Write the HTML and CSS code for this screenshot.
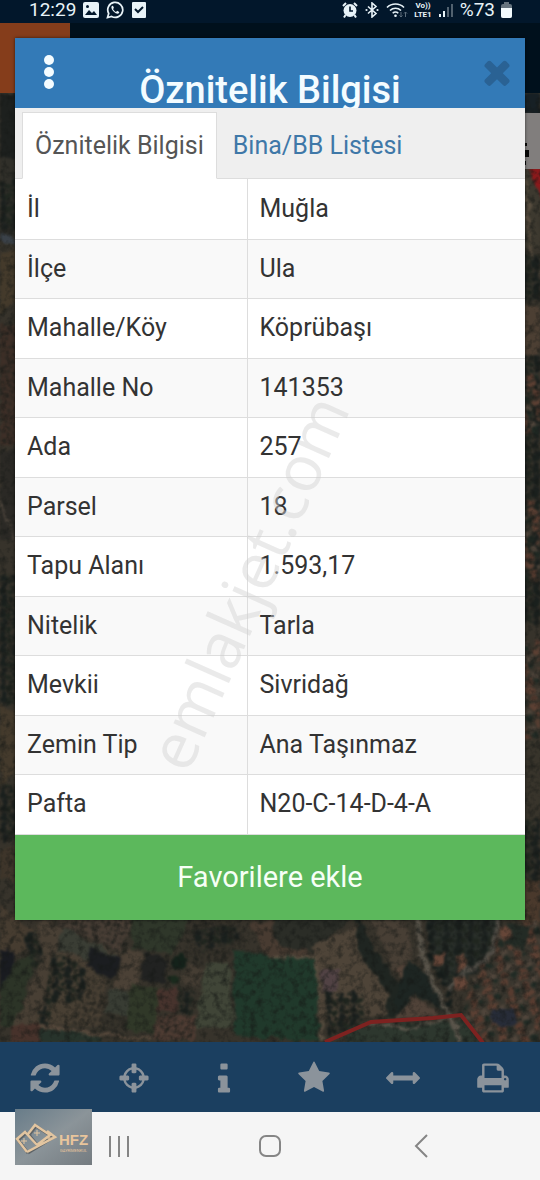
FILE: index.html
```
<!DOCTYPE html>
<html lang="tr">
<head>
    <meta charset="UTF-8">
    <meta name="viewport" content="width=device-width, initial-scale=1.0">
    <title>Öznitelik Bilgisi</title>
    <link rel="stylesheet" href="styles.css">
</head>
<body>
    <div class="screen">
        <div class="app">
            <header class="status-bar">
                <div class="status-group">
                    <span>12:29</span>
                    <svg class="status-icon" viewBox="0 0 16 16" aria-hidden="true">
                        <rect width="16" height="16" rx="2" fill="#e8f3f8"/>
                        <path d="M2 13l4-5 3 3 2-2 3 4z" fill="#02172b"/>
                        <circle cx="4.500" cy="4.500" r="1.500" fill="#02172b"/>
                    </svg>
                    <svg class="status-icon wide" viewBox="0 0 18 18" aria-hidden="true">
                        <path d="M1.500 16.500l1.200-4A7.500 7.500 0 1 1 5.600 15.400z" fill="none" stroke="#e8f3f8" stroke-width="1.700"/>
                        <path d="M6 5c-1.500 1 0 4 1.800 5.700C9.700 12.500 12 13.300 13 12c.6-.8.3-1.200-1.800-2.200L10 11C8.500 10.300 7.500 9 7 8l.9-1C7.300 5 7 4.500 6 5z" fill="#e8f3f8"/>
                    </svg>
                    <svg class="status-icon" viewBox="0 0 16 16" aria-hidden="true">
                        <rect x="1" width="14" height="16" rx="1" fill="#e8f3f8"/>
                        <path d="M4 7l3 3 5-5" fill="none" stroke="#02172b" stroke-width="2"/>
                    </svg>
                </div>
                <div class="status-group right">
                    <svg class="status-icon" viewBox="0 0 16 16" aria-hidden="true">
                        <circle cx="8" cy="8.500" r="6.500" fill="#e8f3f8"/>
                        <path d="M1 4l3-3M15 4l-3-3M3.500 13L2 15.500M12.500 13l1.500 2.500" stroke="#e8f3f8" stroke-width="2"/>
                        <path d="M8 4.500V9h3" fill="none" stroke="#02172b" stroke-width="1.600"/>
                    </svg>
                    <svg class="status-icon" viewBox="0 0 16 16" aria-hidden="true">
                        <path d="M4 4.500l8 7-4 3.500V1l4 3.500-8 7" fill="none" stroke="#e8f3f8" stroke-width="1.600"/>
                        <circle cx="2.500" cy="8" r="1.100" fill="#e8f3f8"/>
                        <circle cx="13.500" cy="8" r="1.100" fill="#e8f3f8"/>
                    </svg>
                    <svg class="status-icon wider" viewBox="0 0 22 16" aria-hidden="true">
                        <path d="M1 5.500a12 12 0 0 1 17 0M4 8.500a8 8 0 0 1 11 0M6.700 11.300a4 4 0 0 1 5.600 0" fill="none" stroke="#e8f3f8" stroke-width="1.600"/>
                        <circle cx="9.500" cy="13.700" r="1.300" fill="#e8f3f8"/>
                        <path d="M15 10v5m-1.500-1.500L15 15l1.500-1.500M19.500 15v-5M18 11.500l1.500-1.500 1.500 1.500" fill="none" stroke="#5c6d7b"/>
                    </svg>
                    <span class="volte"><span>Vo))</span><span>LTE1</span></span>
                    <svg class="status-icon" viewBox="0 0 16 16" aria-hidden="true">
                        <path d="M2 12v3M6 9v6" stroke="#e8f3f8" stroke-width="2"/>
                        <path d="M10 5v10M14 2v13" stroke="#51616f" stroke-width="2"/>
                    </svg>
                    <span>%73</span>
                    <svg class="battery" viewBox="0 0 11 16" aria-hidden="true">
                        <rect x="3" width="5" height="3" fill="#66747f"/>
                        <rect y="2" width="11" height="14" rx="2" fill="#66747f"/>
                        <path d="M0 6h11v8a2 2 0 0 1-2 2H2a2 2 0 0 1-2-2z" fill="#f2fafd"/>
                    </svg>
                </div>
            </header>
            <div class="brand-bar"><div class="brand"></div></div>

            <svg class="map" viewBox="0 93 540 949" preserveAspectRatio="xMidYMax slice" aria-hidden="true">
                <defs>
                    <filter id="rough" x="0" y="0" width="100%" height="100%" color-interpolation-filters="sRGB">
                        <feTurbulence type="fractalNoise" baseFrequency="0.1" numOctaves="3" seed="4" result="n"/>
                        <feDisplacementMap in="SourceGraphic" in2="n" scale="9" xChannelSelector="R" yChannelSelector="G"/>
                        <feGaussianBlur stdDeviation="0.8"/>
                    </filter>
                    <filter id="grain" x="0" y="0" width="100%" height="100%" color-interpolation-filters="sRGB">
                        <feTurbulence type="fractalNoise" baseFrequency="0.14" numOctaves="3" seed="9"/>
                        <feColorMatrix values="0 0 0 0 0.08  0 0 0 0 0.09  0 0 0 0 0.08  1.4 0 0 0 -0.6"/>
                    </filter>
                    <pattern id="trees" width="13" height="12" patternUnits="userSpaceOnUse">
                        <circle cx="3" cy="3" r="3.500" fill="#1a201d"/>
                        <circle cx="9" cy="5" r="3" fill="#20261f"/>
                        <circle cx="4" cy="10" r="3" fill="#1b201e"/>
                        <circle cx="11" cy="11" r="2" fill="#1b221d"/>
                    </pattern>
                    <pattern id="orchard" width="6" height="6" patternUnits="userSpaceOnUse" patternTransform="rotate(18)">
                        <circle cx="3" cy="3" r="1.600" fill="#24241f"/>
                    </pattern>
                    <pattern id="houses" width="19" height="17" patternUnits="userSpaceOnUse" patternTransform="rotate(-18)">
                        <rect x="1" y="1" width="9" height="6" fill="#5c4033"/>
                        <rect x="12" y="5" width="6" height="6" fill="#50453b"/>
                        <rect x="4" y="10" width="7" height="6" fill="#573b2f"/>
                        <circle cx="15" cy="14" r="3" fill="#202a24"/>
                    </pattern>
                </defs>
                <rect y="93" width="540" height="949" fill="#37332b"/>
                <g filter="url(#rough)">
                    <!-- left edge -->
                    <path d="M0 93h24v65H0z" fill="#1d201e"/>
                    <path d="M0 158h24v80H0z" fill="#302f29"/>
                    <path d="M0 180h24v50H0z" fill="url(#trees)"/>
                    <path d="M0 236l24 9" stroke="#3a4148" stroke-width="6"/>
                    <path d="M0 252l24-2v45l-24 18z" fill="#443a2b"/>
                    <path d="M0 325h24v120H0z" fill="#3e2f27"/>
                    <path d="M0 325h24v120H0z" fill="url(#orchard)"/>
                    <path d="M0 450h24v90H0z" fill="#2b2925"/>
                    <path d="M0 500l24 60" stroke="#4c443b" stroke-width="3"/>
                    <path d="M0 575h24v130H0z" fill="url(#trees)"/>
                    <path d="M0 705l24 15v35L0 790z" fill="#443a2c"/>
                    <path d="M0 785h24v55H0z" fill="url(#trees)"/>
                    <path d="M0 850l24-10v40H0z" fill="#3e352a"/>
                    <!-- right edge -->
                    <path d="M518 93h22v22h-22z" fill="#172025"/>
                    <path d="M518 168h22v80h-22z" fill="#3d392f"/>
                    <path d="M528 166h18v40z" fill="#8b191b"/>
                    <path d="M526 180l5 70 10 25" fill="none" stroke="#5b5041" stroke-width="3"/>
                    <path d="M518 255h22v45h-22z" fill="url(#trees)"/>
                    <path d="M518 305h22v50h-22z" fill="#4c3f33"/>
                    <path d="M518 355h22v270h-22z" fill="url(#trees)"/>
                    <path d="M518 372h22v60h-22zM518 500h22v80h-22zM518 640h22v100h-22z" fill="url(#houses)"/>
                    <path d="M518 740h22v80h-22z" fill="#38342b"/>
                    <path d="M518 820h22v60h-22z" fill="url(#trees)"/>
                    <path d="M518 880h22v48l-22-8z" fill="#4a392c"/>
                    <!-- fields below the dialog -->
                    <path d="M0 905l34 26-10 20-24 4z" fill="#463c30"/>
                    <path d="M0 950h16l-2 32-14 10z" fill="#191b20"/>
                    <path d="M18 960l18-8-20 74H0v-34z" fill="#2c3427"/>
                    <path d="M25 935l22-10 6 25-20 20z" fill="url(#trees)"/>
                    <path d="M45 918l80 40-30 10-38-15-22 72H14l30-72-10-27z" fill="#483f34"/>
                    <path d="M62 925l55 31-22 6-38-12z" fill="#3a3d34"/>
                    <path d="M60 914h78l-18 38-62-28z" fill="#4a3f36"/>
                    <path d="M60 914h78l-18 38-62-28z" fill="url(#orchard)"/>
                    <path d="M54 950l34 15 17 16-4 46-67-2 16-40z" fill="#483f33"/>
                    <path d="M80 968l24 14-4 43-27 1z" fill="url(#orchard)"/>
                    <path d="M52 950l34 18-4 32-14 3-6-10-8 12-6 20-12 0 12-40z" fill="url(#trees)"/>
                    <path d="M90 947l32 12-10 21-24-14z" fill="#1b1d20"/>
                    <path d="M130 914h60l-18 43-40-10z" fill="#2f372a"/>
                    <path d="M128 947l16 8-14 62-26-5z" fill="#4b4136"/>
                    <path d="M108 988l24 3-5 25-22-3z" fill="#383c33"/>
                    <path d="M145 953l24 7-4 24-24-4z" fill="#212221"/>
                    <path d="M131 984l27 4-3 46-30-5z" fill="#303828"/>
                    <path d="M158 988l20 2-2 23-20-3z" fill="#47332d"/>
                    <path d="M179 988l17 4-3 22-16-4z" fill="url(#trees)"/>
                    <path d="M188 965l17 5-7 18-18-6z" fill="#453d33"/>
                    <path d="M186 920h54l8 30-45 17-16-17z" fill="url(#orchard)"/>
                    <path d="M190 930l46-4 6 12-40 14z" fill="url(#trees)"/>
                    <circle cx="179" cy="962" r="7" fill="#14221a"/>
                    <circle cx="174" cy="980" r="5" fill="#1a2a1d"/>
                    <path d="M205 964l25-2 3 65-38 1z" fill="#404537"/>
                    <path d="M234 950l38 5 43 4 4 83-84-6z" fill="#20392b"/>
                    <path d="M250 925l40-10 18 41-40 2z" fill="#483b31"/>
                    <path d="M155 1014l40 2v24h-42z" fill="#4f3c33"/>
                    <path d="M155 1014l40 2v24h-42zM98 1013l30 3v24h-30z" fill="url(#orchard)"/>
                    <path d="M12 1025h28v17H12z" fill="#47322b"/>
                    <path d="M40 1028l60 5v9H40z" fill="#27332b"/>
                    <path d="M38 1026l62 8 50 5" fill="none" stroke="#57493c" stroke-width="3"/>
                    <path d="M270 957h46l6 85" fill="none" stroke="#5b5042" stroke-width="3"/>
                    <path d="M270 914h86l-44 38-34-6z" fill="#2b2d27"/>
                    <path d="M312 945l48-20 18 35 22 32-12 22-68 6-1-55z" fill="#4e4438"/>
                    <path d="M356 914l22 40 26 35-8 28h-12l4-25-30-40z" fill="#1f2521"/>
                    <path d="M372 920h34l8 38-22 12z" fill="#483f35"/>
                    <path d="M326 992h36l2 30-36 14z" fill="url(#trees)"/>
                    <path d="M320 970l20-3-5 24-12 2z" fill="#514244"/>
                    <path d="M394 970l16-8 12 12-14 10z" fill="#544439"/>
                    <path d="M395 1018l16-23 30 20z" fill="#504238"/>
                    <path d="M408 960l17 12 20 40-30-18-18 20-2-16z" fill="#1d2522"/>
                    <path d="M425 918h70l-4 40-40 35-18-30z" fill="#2b302b"/>
                    <path d="M426 918h66v50l-50 12z" fill="url(#trees)"/>
                    <path d="M496 955l44-20v107h-70l-8-22z" fill="#3a362e"/>
                    <path d="M496 930l44-10v122h-70l-8-32z" fill="url(#houses)"/>
                    <path d="M508 922l22 6-6 22-18-6z" fill="#232b25"/>
                    <path d="M350 1028l120-8 8 22H345z" fill="#2d372e"/>
                    <path d="M417 914l5 42 13 30 14 28 12 28" fill="none" stroke="#59544a" stroke-width="5"/>
                    <path d="M428 914l3 44 15 28 6 26" fill="none" stroke="#161d1b" stroke-width="5" stroke-dasharray="6 4"/>
                    <path d="M498 914l-7 41-24 16-18 20" fill="none" stroke="#514d46" stroke-width="4"/>
                    <path d="M433 955h12v11h-12zM456 957l9-2 2 15-9 1zM453 978l12-2 2 12-11 3zM500 928l9-3 3 12-10 4z" fill="#664638"/>
                    <path d="M492 1008l22 2 3 12-16 6-10-9z" fill="#272c38"/>
                    <path d="M370 1024l40 5 44-12" fill="none" stroke="#625b50" stroke-width="2"/>
                </g>
                <rect y="93" width="540" height="949" filter="url(#grain)"/>
                <path d="M325 1042l46-20 62-4 28-3 22 28" fill="none" stroke="#7d2220" stroke-width="4"/>
                <!-- map tool panel -->
                <path d="M510 113h30v56h-30z" fill="#817e7d"/>
                <path d="M525 150h4v7h-4zM525 143h2v3h-2zM525 161h1v4h-1z" fill="#080808"/>
            </svg>

            <nav class="toolbar" aria-label="Harita araçları">
                <button type="button" aria-label="Yenile">
                    <svg viewBox="0 0 1792 1792"><path d="M1639 1056q0 5-1 7-64 268-268 434.500t-478 166.500q-146 0-282.500-55t-243.500-157l-129 129q-19 19-45 19t-45-19-19-45v-448q0-26 19-45t45-19h448q26 0 45 19t19 45-19 45l-137 137q71 66 161 102t187 36q134 0 250-65t186-179q11-17 53-117 8-23 30-23h192q13 0 22.500 9.500t9.500 22.500zm25-800v448q0 26-19 45t-45 19h-448q-26 0-45-19t-19-45 19-45l138-138q-148-137-349-137-134 0-250 65t-186 179q-11 17-53 117-8 23-30 23h-199q-13 0-22.500-9.500t-9.500-22.500v-7q65-268 270-434.500t480-166.500q146 0 284 55.500t245 156.500l130-129q19-19 45-19t45 19 19 45z"/></svg>
                </button>
                <button type="button" aria-label="Konum">
                    <svg viewBox="0 0 1792 1792"><path d="M1325 1024h-109q-26 0-45-19t-19-45v-128q0-26 19-45t45-19h109q-32-108-112.500-188.500t-188.500-112.500v109q0 26-19 45t-45 19h-128q-26 0-45-19t-19-45v-109q-108 32-188.500 112.500t-112.500 188.500h109q26 0 45 19t19 45v128q0 26-19 45t-45 19h-109q32 108 112.500 188.500t188.500 112.500v-109q0-26 19-45t45-19h128q26 0 45 19t19 45v109q108-32 188.500-112.500t112.500-188.500zm339-192v128q0 26-19 45t-45 19h-143q-37 161-154.500 278.500t-278.500 154.500v143q0 26-19 45t-45 19h-128q-26 0-45-19t-19-45v-143q-161-37-278.500-154.500t-154.500-278.500h-143q-26 0-45-19t-19-45v-128q0-26 19-45t45-19h143q37-161 154.500-278.500t278.500-154.500v-143q0-26 19-45t45-19h128q26 0 45 19t19 45v143q161 37 278.500 154.500t154.500 278.500h143q26 0 45 19t19 45z"/></svg>
                </button>
                <button type="button" aria-label="Bilgi">
                    <svg viewBox="0 0 1792 1792"><path d="M1216 1472v128q0 26-19 45t-45 19h-512q-26 0-45-19t-19-45v-128q0-26 19-45t45-19h64v-384h-64q-26 0-45-19t-19-45v-128q0-26 19-45t45-19h384q26 0 45 19t19 45v576h64q26 0 45 19t19 45zm-128-1280v192q0 26-19 45t-45 19h-256q-26 0-45-19t-19-45v-192q0-26 19-45t45-19h256q26 0 45 19t19 45z"/></svg>
                </button>
                <button type="button" aria-label="Favoriler">
                    <svg viewBox="0 0 1792 1792"><path d="M1728 647q0 22-26 48l-363 354 86 500q1 7 1 20 0 21-10.500 35.500t-30.500 14.500q-19 0-40-12l-449-236-449 236q-22 12-40 12-21 0-31.500-14.500t-10.500-35.500q0-6 2-20l86-500-364-354q-25-27-25-48 0-37 56-46l502-73 225-455q19-41 49-41t49 41l225 455 502 73q56 9 56 46z"/></svg>
                </button>
                <button type="button" aria-label="Ölçüm">
                    <svg viewBox="0 0 1792 1792"><path d="M1792 896q0 26-19 45l-256 256q-19 19-45 19t-45-19-19-45v-128h-1024v128q0 26-19 45t-45 19-45-19l-256-256q-19-19-19-45t19-45l256-256q19-19 45-19t45 19 19 45v128h1024v-128q0-26 19-45t45-19 45 19l256 256q19 19 19 45z"/></svg>
                </button>
                <button type="button" aria-label="Yazdır">
                    <svg viewBox="0 0 1792 1792"><path d="M448 1536h896v-256h-896v256zm0-640h896v-384h-160q-40 0-68-28t-28-68v-160h-640v640zm1152 64q0-26-19-45t-45-19-45 19-19 45 19 45 45 19 45-19 19-45zm128 0v416q0 13-9.500 22.500t-22.500 9.500h-224v160q0 40-28 68t-68 28h-960q-40 0-68-28t-28-68v-160h-224q-13 0-22.500-9.500t-9.500-22.500v-416q0-79 56.500-135.500t135.500-56.500h64v-544q0-40 28-68t68-28h672q40 0 88 20t76 48l152 152q28 28 48 76t20 88v256h64q79 0 135.500 56.500t56.500 135.500z"/></svg>
                </button>
            </nav>

            <footer class="system-nav">
                <button type="button" aria-label="Son uygulamalar">
                    <svg viewBox="0 0 24 24"><path d="M3 2v21M12 2v21M21 2v21"/></svg>
                </button>
                <button type="button" aria-label="Ana ekran">
                    <svg viewBox="0 0 24 24"><rect x="2" y="2" width="20" height="20" rx="6"/></svg>
                </button>
                <button type="button" aria-label="Geri">
                    <svg viewBox="0 0 24 24"><path d="M18 1L7 12l11 11"/></svg>
                </button>
                <svg class="agency-logo" viewBox="0 0 77 56" role="img" aria-label="HFZ Gayrimenkul">
                    <defs>
                        <linearGradient id="plate" x1="0" y1="0" x2="1" y2="1">
                            <stop offset="0" stop-color="#687c89"/>
                            <stop offset="0.500" stop-color="#8b9499"/>
                            <stop offset="1" stop-color="#747b80"/>
                        </linearGradient>
                    </defs>
                    <rect width="77" height="56" fill="url(#plate)"/>
                    <g fill="none" stroke="#5f6467" stroke-width="3" transform="translate(1 1)">
                        <path d="M12 43L2 30l8-7 5 4M13 25l7-9 15 10-13 10zM12 43l26-16"/>
                    </g>
                    <g fill="none" stroke="#e2c5a0" stroke-width="2.500">
                        <path d="M12 43L2 30l8-7 12 13M13 25l7-9 15 10-13 10M32 22l8 6-28 15"/>
                        <path d="M9 29v6M6 32h6M22 21v6M19 24h6M34 27v5M31 29h6" stroke-width="1"/>
                    </g>
                    <text class="logo-name" x="44" y="36">HFZ</text>
                    <text class="logo-sub" x="45" y="43">GAYRİMENKUL</text>
                </svg>
            </footer>
        </div>

        <main class="dialog" role="dialog" aria-labelledby="dialogTitle">
            <div class="dialog-header">
                <button type="button" class="menu-btn" aria-label="Menü">
                    <svg viewBox="0 0 12 36"><circle cx="6" cy="6" r="5"/><circle cx="6" cy="18" r="5"/><circle cx="6" cy="30" r="5"/></svg>
                </button>
                <h1 id="dialogTitle">Öznitelik Bilgisi</h1>
                <button type="button" class="close-btn" aria-label="Kapat">
                    <svg viewBox="0 0 1792 1792"><path d="M1490 1322q0 40-28 68l-136 136q-28 28-68 28t-68-28l-294-294-294 294q-28 28-68 28t-68-28l-136-136q-28-28-28-68t28-68l294-294-294-294q-28-28-28-68t28-68l136-136q28-28 68-28t68 28l294 294 294-294q28-28 68-28t68 28l136 136q28 28 28 68t-28 68l-294 294 294 294q28 28 28 68z"/></svg>
                </button>
            </div>
            <div class="tabs" role="tablist">
                <button type="button" class="tab active" role="tab" aria-selected="true">Öznitelik Bilgisi</button>
                <button type="button" class="tab" role="tab" aria-selected="false">Bina/BB Listesi</button>
            </div>
            <table class="attributes">
                <tbody>
                    <tr><th scope="row">İl</th><td>Muğla</td></tr>
                    <tr><th scope="row">İlçe</th><td>Ula</td></tr>
                    <tr><th scope="row">Mahalle/Köy</th><td>Köprübaşı</td></tr>
                    <tr><th scope="row">Mahalle No</th><td>141353</td></tr>
                    <tr><th scope="row">Ada</th><td>257</td></tr>
                    <tr><th scope="row">Parsel</th><td>18</td></tr>
                    <tr><th scope="row">Tapu Alanı</th><td>1.593,17</td></tr>
                    <tr><th scope="row">Nitelik</th><td>Tarla</td></tr>
                    <tr><th scope="row">Mevkii</th><td>Sivridağ</td></tr>
                    <tr><th scope="row">Zemin Tip</th><td>Ana Taşınmaz</td></tr>
                    <tr><th scope="row">Pafta</th><td>N20-C-14-D-4-A</td></tr>
                </tbody>
            </table>
            <button type="button" class="favorite-btn">Favorilere ekle</button>
            <svg class="watermark" viewBox="0 0 240 400" aria-hidden="true">
                <text transform="translate(53 397) rotate(-66)">emlakjet.com</text>
            </svg>
        </main>
    </div>
</body>
</html>
```
FILE: styles.css
```
* {
    box-sizing: border-box;
}
body {
    margin: 0;
    font-family: Roboto, 'Liberation Sans', sans-serif;
    background-color: #02172b;
    color: #333;
}
button {
    border: none;
    padding: 0;
    background: none;
    font-family: inherit;
    cursor: pointer;
}
svg {
    display: block;
}

/* The dialog shares one grid cell with the dimmed app behind it */
.screen {
    display: grid;
    min-height: 100vh;
}
.app,
.dialog {
    grid-area: 1 / 1;
    min-width: 0;
}
.app {
    display: flex;
    flex-direction: column;
}

/* Status bar */
.status-bar {
    display: flex;
    justify-content: space-between;
    height: 23px;
    padding: 0 28px 4px 29px;
    background-color: #02172b;
    color: #e8f3f8;
    font-size: 19px;
    line-height: 19px;
}
.status-group {
    display: flex;
    align-items: center;
    gap: 7px;
}
.status-group.right {
    gap: 6px;
}
.status-icon {
    width: 16px;
    height: 16px;
}
.status-icon.wide {
    width: 18px;
    height: 18px;
}
.status-icon.wider {
    width: 22px;
}
.volte {
    display: flex;
    flex-direction: column;
    font-size: 8px;
    font-weight: 700;
    line-height: 9px;
    text-align: center;
}
.battery {
    width: 11px;
    height: 16px;
}
.brand-bar {
    height: 70px;
    background-color: #00101c;
}
.brand {
    width: 70px;
    height: 100%;
    background-color: #853d1b;
}

/* Map */
.map {
    flex: 1 0 0;
    width: 100%;
    min-height: 0;
}

/* Bottom bars */
.toolbar {
    display: grid;
    grid-template-columns: repeat(6, 1fr);
    height: 70px;
    padding: 2px 2px 0 0;
    background-color: #1b3f60;
}
.toolbar button,
.system-nav button {
    display: flex;
    align-items: center;
    justify-content: center;
}
.toolbar svg {
    width: 34px;
    height: 34px;
    fill: #8b939b;
}
.system-nav {
    position: relative;
    display: grid;
    grid-template-columns: repeat(3, 1fr);
    height: 68px;
    padding: 0 44px;
    background-color: #f5f5f5;
}
.system-nav button svg {
    width: 24px;
    height: 24px;
    fill: none;
    stroke: #858585;
    stroke-width: 2;
}
.agency-logo {
    position: absolute;
    left: 15px;
    top: -3px;
    width: 77px;
    height: 56px;
}
.logo-name {
    font-family: 'Liberation Sans Narrow', 'Liberation Sans', sans-serif;
    font-size: 15px;
    font-weight: 700;
    fill: #e8c59c;
}
.logo-sub {
    font-size: 4px;
    fill: #e8c59c;
}

/* Dialog */
.dialog {
    position: relative;
    align-self: start;
    margin: 38px 15px 0;
    background-color: #fff;
    box-shadow: 0 0 3px rgba(0, 0, 0, 0.6);
}
.dialog-header {
    display: grid;
    grid-template-columns: 64px 1fr 64px;
    height: 70px;
    overflow: hidden;
    background-color: #337ab7;
}
.dialog-header h1 {
    margin: 0;
    padding-top: 30px;
    color: #f4fcff;
    font-size: 38px;
    font-weight: 500;
    line-height: 44px;
    text-align: center;
    white-space: nowrap;
}
.menu-btn,
.close-btn {
    display: flex;
    align-items: center;
    justify-content: center;
    height: 68px;
}
.menu-btn {
    padding-left: 3px;
}
.menu-btn svg {
    width: 12px;
    height: 36px;
    fill: #f4fcff;
}
.close-btn {
    padding-left: 8px;
}
.close-btn svg {
    width: 38px;
    height: 38px;
    fill: #2a6294;
}
.tabs {
    display: flex;
    height: 71px;
    padding: 4px 7px 0;
    border-bottom: 1px solid #ddd;
    background-color: #efefef;
}
.tab {
    padding: 0 12px;
    border: 1px solid transparent;
    color: #3f78a8;
    font-size: 25px;
    white-space: nowrap;
}
.tab + .tab {
    margin-left: 3px;
}
.tab.active {
    margin-bottom: -1px;
    border-color: #ddd;
    border-bottom-color: #fff;
    background-color: #fff;
    color: #555;
}
.attributes {
    width: 100%;
    border-collapse: collapse;
    table-layout: fixed;
    font-size: 25px;
    line-height: 30px;
}
.attributes tr {
    height: 60px;
    border-bottom: 1px solid #ddd;
}
.attributes tr:nth-child(even) {
    height: 59px;
    background-color: #f9f9f9;
}
.attributes th,
.attributes td {
    padding: 0 12px;
    font-weight: 400;
    text-align: left;
}
.attributes th {
    width: 232px;
    border-right: 1px solid #ddd;
}
.favorite-btn {
    display: block;
    width: 100%;
    height: 85px;
    background-color: #5cb85c;
    color: #f6fff6;
    font-size: 29px;
}
.watermark {
    position: absolute;
    left: 120px;
    top: 340px;
    width: 240px;
    height: 400px;
    overflow: visible;
    pointer-events: none;
}
.watermark text {
    font-family: 'Open Sans', sans-serif;
    font-size: 64px;
    fill: #d0d0d0;
    fill-opacity: 0.45;
}
```
